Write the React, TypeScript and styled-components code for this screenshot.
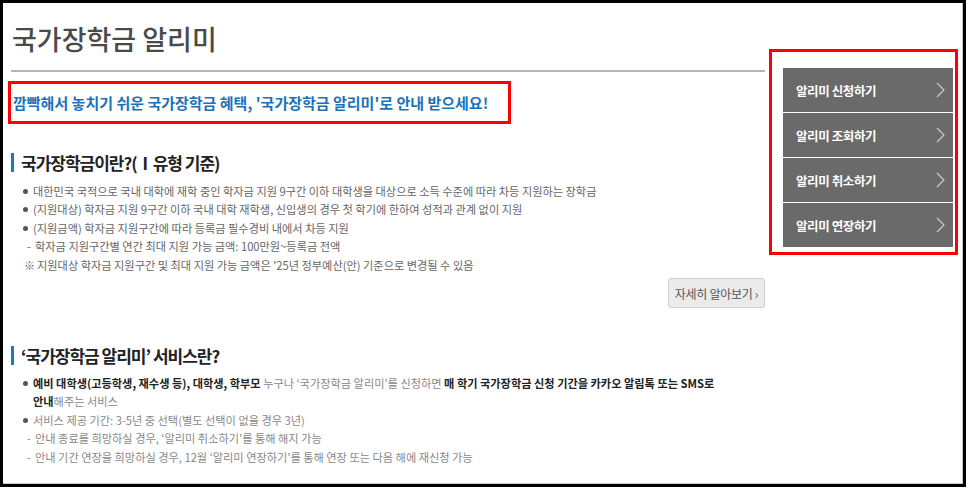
import styled, { createGlobalStyle } from 'styled-components';

const GlobalStyle = createGlobalStyle`
  html, body {
    margin: 0;
    padding: 0;
    background: #000;
  }
  body {
    font-family: 'Noto Sans CJK KR', 'Noto Sans', sans-serif;
  }
`;

const Frame = styled.div`
  width: 966px;
  height: 487px;
  padding: 3px 3px 3px 3px;
  box-sizing: border-box;
  background: #000;
`;

const Page = styled.div`
  display: flex;
  align-items: flex-start;
  height: 100%;
  background: #fff;
  border-right: 1px solid #c8c8c8;
  border-bottom: 1px solid #c8c8c8;
  box-sizing: border-box;
  overflow: hidden;
`;

const Main = styled.main`
  width: 762px;
  padding-left: 5px;
  box-sizing: border-box;
`;

const Title = styled.h1`
  margin: 20px 0 0 4px;
  font-size: 27px;
  line-height: 32px;
  font-weight: 500;
  color: #4a4a4a;
`;

const Rule = styled.hr`
  margin: 15px 0 0 3px;
  border: 0;
  height: 2px;
  background: #b4b4bc;
`;

const Notice = styled.div`
  margin-top: 9px;
  width: 503px;
  height: 43px;
  display: flex;
  align-items: center;
  border: 3px solid #ff0000;
  box-sizing: border-box;
  padding-left: 2px;
  font-size: 15px;
  font-weight: 700;
  color: #1b72b8;
  white-space: nowrap;
`;

const Section = styled.section<{ $top: number }>`
  margin-top: ${p => p.$top}px;
  padding-left: 3px;
`;

const Heading = styled.h2`
  margin: 0;
  display: flex;
  align-items: center;
  gap: 7px;
  font-size: 17px;
  line-height: 19px;
  font-weight: 700;
  letter-spacing: -1px;
  color: #222;

  &::before {
    content: '';
    width: 3px;
    height: 19px;
    background: #1f77c0;
    flex: none;
  }
`;

const List = styled.ul`
  margin: 10px 0 0;
  padding: 0;
  list-style: none;
`;

const Item = styled.li<{ $kind?: 'dot' | 'dash' | 'note' }>`
  position: relative;
  padding-left: ${p => (p.$kind === 'dash' ? 24 : p.$kind === 'note' ? 26 : 22)}px;
  font-size: 11.2px;
  line-height: 18.4px;
  color: #666;
  white-space: nowrap;

  &::before {
    position: absolute;
    left: ${p => (p.$kind === 'dash' ? 16 : 13)}px;
    top: 0;
    content: ${p => (p.$kind === 'dash' ? "'-'" : p.$kind === 'note' ? "'※'" : "''")};
    font-size: 11px;
  }

  ${p =>
    (p.$kind ?? 'dot') === 'dot' &&
    `
    &::before {
      left: 12px;
      top: 7px;
      width: 5px;
      height: 5px;
      border-radius: 50%;
      background: #555;
    }
  `}
`;

const Light = styled(List)`
  margin-top: 9px;
  & > li {
    color: #888;
  }
`;

const Strong = styled.b`
  font-weight: 700;
  color: #222;
`;

const MoreRow = styled.div`
  display: flex;
  justify-content: flex-end;
  margin-top: 4px;
`;

const MoreButton = styled.button`
  width: 97px;
  height: 30px;
  padding: 0;
  border: 1px solid #cfcfcf;
  border-radius: 3px;
  background: #ebebeb;
  font-family: inherit;
  font-size: 12px;
  letter-spacing: -0.3px;
  color: #555;
  cursor: pointer;
`;

const Sidebar = styled.aside`
  margin: 46px 0 0 4px;
  width: 189px;
  border: 3px solid #ff0000;
  box-sizing: border-box;
  padding: 16px 2px 5px 11px;
  display: flex;
  flex-direction: column;
  gap: 1px;
`;

const MenuButton = styled.a`
  display: flex;
  align-items: center;
  justify-content: space-between;
  height: 44px;
  padding: 0 8px 0 13px;
  background: #6a6a6a;
  font-size: 12.5px;
  font-weight: 700;
  letter-spacing: -0.4px;
  color: #fff;
  text-decoration: none;
  cursor: pointer;
`;

const Chevron = () => (
  <svg width="9" height="16" viewBox="0 0 9 16" fill="none">
    <path d="M1 1l7 7-7 7" stroke="#cfcfcf" strokeWidth="1.1" />
  </svg>
);

const menus = ['알리미 신청하기', '알리미 조회하기', '알리미 취소하기', '알리미 연장하기'];

export default function App() {
  return (
    <>
      <GlobalStyle />
      <Frame>
        <Page>
          <Main>
            <Title>국가장학금 알리미</Title>
            <Rule />
            <Notice>깜빡해서 놓치기 쉬운 국가장학금 혜택, '국가장학금 알리미'로 안내 받으세요!</Notice>

            <Section $top={29}>
              <Heading>국가장학금이란?(Ⅰ유형 기준)</Heading>
              <List>
                <Item>대한민국 국적으로 국내 대학에 재학 중인 학자금 지원 9구간 이하 대학생을 대상으로 소득 수준에 따라 차등 지원하는 장학금</Item>
                <Item>(지원대상) 학자금 지원 9구간 이하 국내 대학 재학생, 신입생의 경우 첫 학기에 한하여 성적과 관계 없이 지원</Item>
                <Item>(지원금액) 학자금 지원구간에 따라 등록금 필수경비 내에서 차등 지원</Item>
                <Item $kind="dash">학자금 지원구간별 연간 최대 지원 가능 금액: 100만원~등록금 전액</Item>
                <Item $kind="note">지원대상 학자금 지원구간 및 최대 지원 가능 금액은 '25년 정부예산(안) 기준으로 변경될 수 있음</Item>
              </List>
              <MoreRow>
                <MoreButton>자세히 알아보기 ›</MoreButton>
              </MoreRow>
            </Section>

            <Section $top={38}>
              <Heading>‘국가장학금 알리미’ 서비스란?</Heading>
              <Light>
                <Item>
                  <Strong>예비 대학생(고등학생, 재수생 등), 대학생, 학부모</Strong> 누구나 ‘국가장학금 알리미’를 신청하면{' '}
                  <Strong>매 학기 국가장학금 신청 기간을 카카오 알림톡 또는 SMS로</Strong>
                  <br />
                  <Strong>안내</Strong>해주는 서비스
                </Item>
                <Item>서비스 제공 기간: 3-5년 중 선택(별도 선택이 없을 경우 3년)</Item>
                <Item $kind="dash">안내 종료를 희망하실 경우, ‘알리미 취소하기’를 통해 해지 가능</Item>
                <Item $kind="dash">안내 기간 연장을 희망하실 경우, 12월 ‘알리미 연장하기’를 통해 연장 또는 다음 해에 재신청 가능</Item>
              </Light>
            </Section>
          </Main>

          <Sidebar>
            {menus.map(label => (
              <MenuButton key={label}>
                {label}
                <Chevron />
              </MenuButton>
            ))}
          </Sidebar>
        </Page>
      </Frame>
    </>
  );
}
